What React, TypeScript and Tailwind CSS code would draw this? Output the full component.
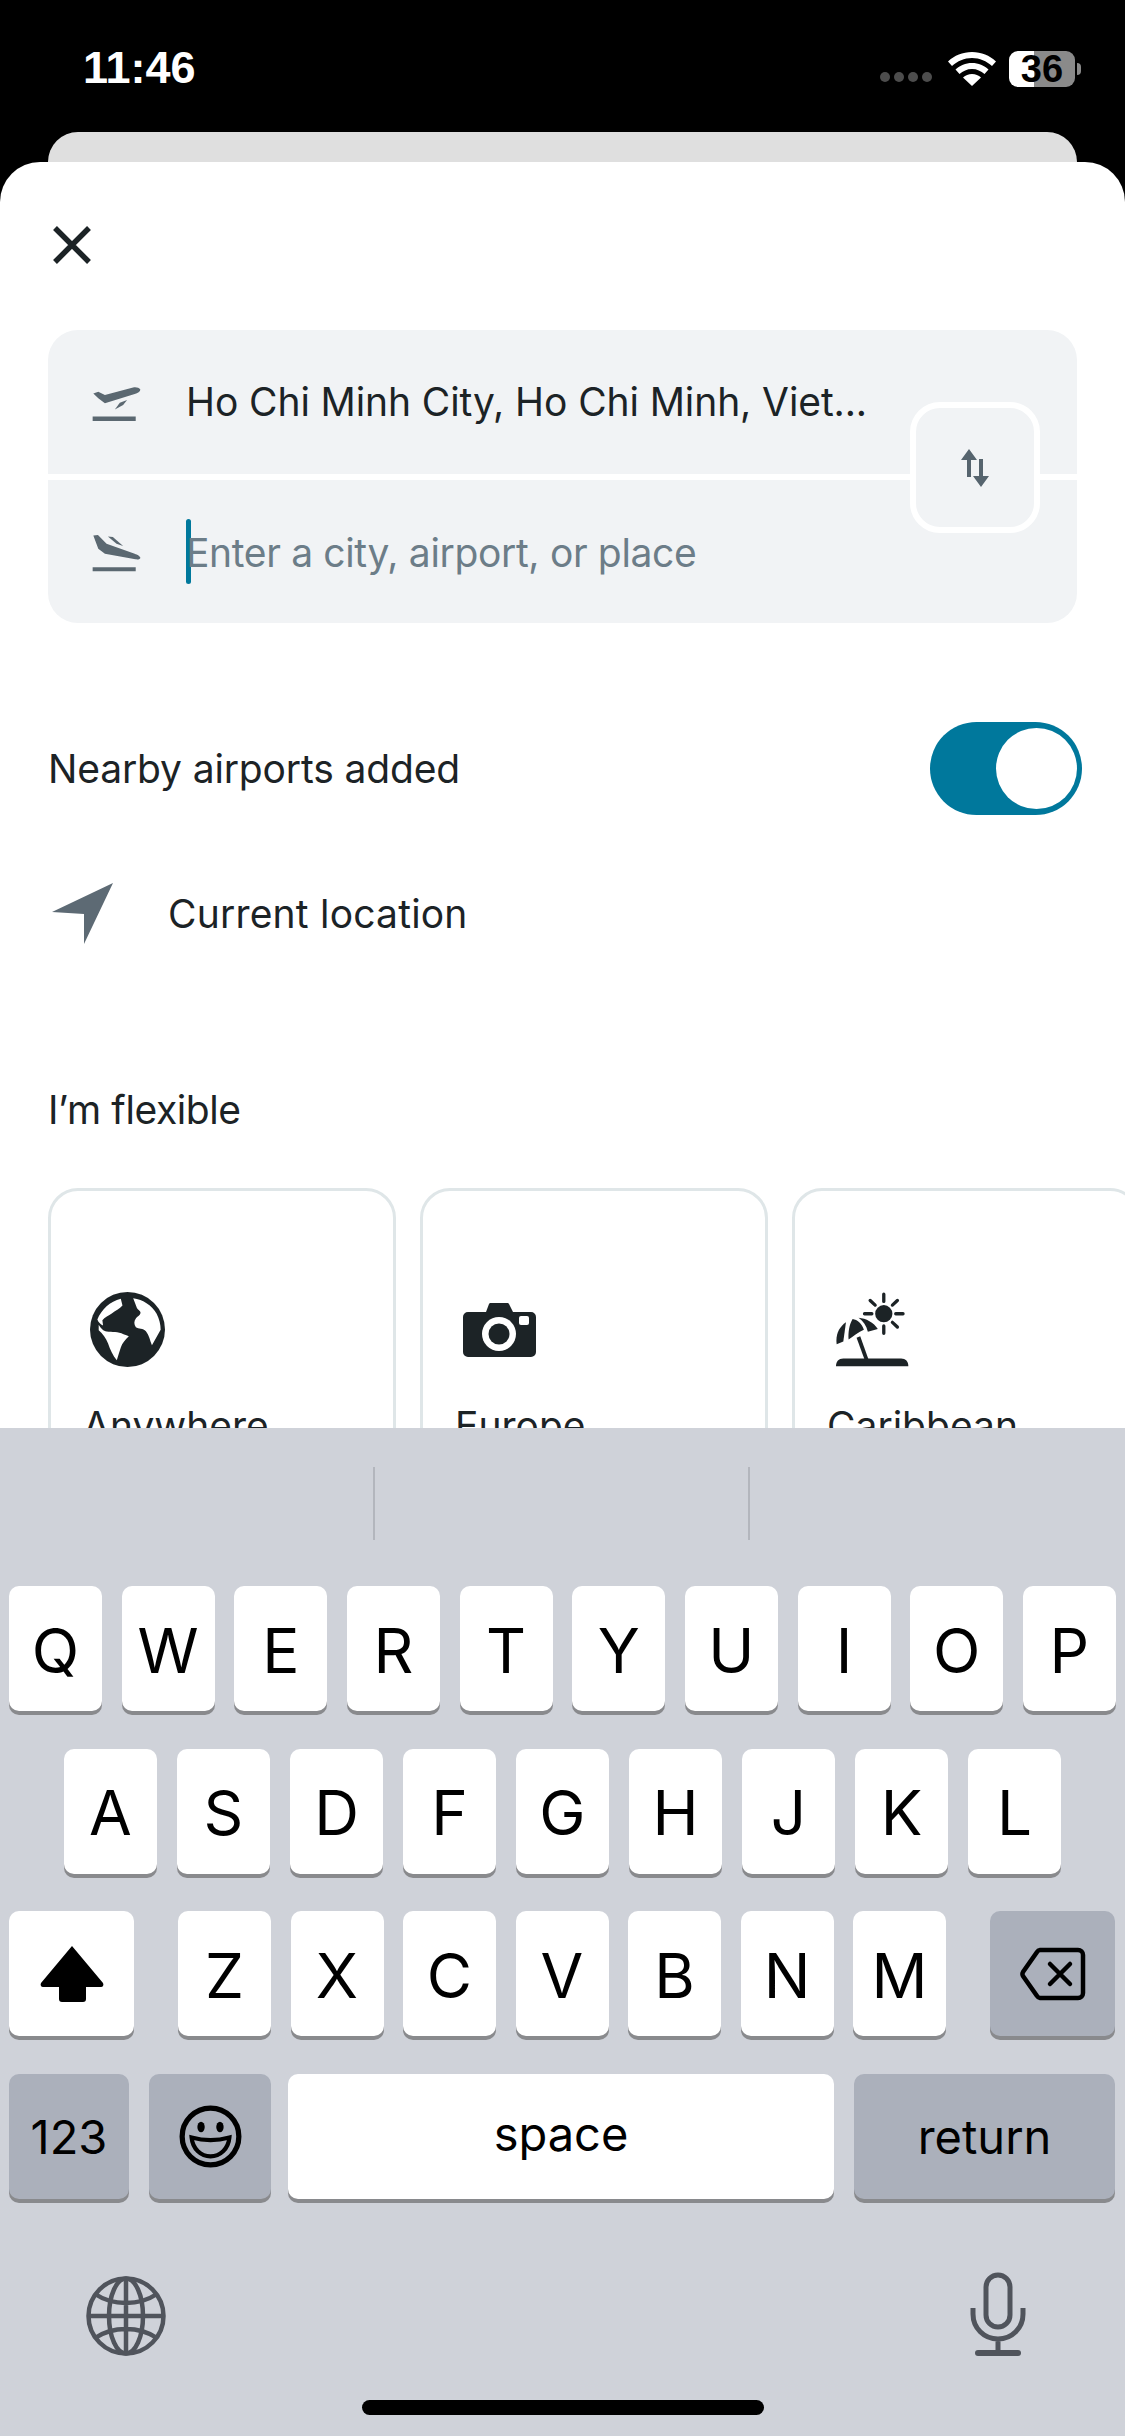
const rowOne = ["Q", "W", "E", "R", "T", "Y", "U", "I", "O", "P"];
const rowTwo = ["A", "S", "D", "F", "G", "H", "J", "K", "L"];
const rowThree = ["Z", "X", "C", "V", "B", "N", "M"];

const LetterKey = ({ label }: { label: string }) => (
  <div className="flex h-[125px] w-[93px] items-center justify-center rounded-[10px] bg-white pt-[4px] text-[62px] leading-none text-black shadow-[0_4px_0_#898a8d]">
    {label}
  </div>
);

const Takeoff = () => (
  <svg viewBox="60 36 160 120" className="h-[40px] w-[53px] shrink-0 fill-[#5b6871]">
    <path d="M68 140h130v13H68z" />
    <path d="M70 70l15-5 20 10 85-23c8-2 18 0 22 6 0 6-8 11-17 14l-90 28-20-15z" />
    <path d="M135 119l15-21 22-8-12 15z" />
  </svg>
);

const Landing = () => (
  <svg viewBox="60 20 160 120" className="h-[40px] w-[53px] shrink-0 fill-[#5b6871]">
    <path d="M68 126h130v12H68z" />
    <path d="M70 30l14-1 26 26 85 30c8 3 17 8 17 12 0 5-7 6-15 5l-92-17-20-15z" />
    <path d="M114 33l15 2 31 27-20-7z" />
  </svg>
);

const SwapArrows = () => (
  <svg viewBox="0 0 30 38" className="h-[38px] w-[30px] fill-[#56646e]">
    <path d="M9 0l8 11H11v17H7V11H1z" />
    <path d="M21 38l8-11h-6V10h-4v17h-6z" />
  </svg>
);

const NavArrow = () => (
  <svg viewBox="0 0 61 61" className="h-[61px] w-[61px]">
    <path d="M61 0L0 29l32 2v30z" className="fill-[#5d6a74]" />
  </svg>
);

const GlobeIcon = () => (
  <svg viewBox="276 126 224 224" className="ml-[7px] h-[75px] w-[75px]">
    <circle cx="388" cy="238" r="112" fill="#1c2326" />
    <path
      d="M298 208c12-30 38-54 70-62l5 20c-8 10-22 16-32 24-8 6-22 12-28 20l2 16c-8-4-14-10-17-18z"
      fill="#fff"
    />
    <path
      d="M405 145c30 4 56 22 70 46 8 16 12 32 12 48l-26 46c-6-14-8-30-18-42-8-10-22-6-30-12-6-8-6-18 0-26 4-6 12-8 14-16 0-8-10-10-12-18z"
      fill="#fff"
    />
    <path
      d="M302 224c6 10 14 20 24 20 16 2 34 0 50 8 6 2 12 4 16 6-10 10-20 20-24 34-4 12-8 26-12 38-12-14-20-32-26-50-6-16-16-30-28-40z"
      fill="#fff"
    />
  </svg>
);

const CameraIcon = () => (
  <svg viewBox="0 0 73 54" className="ml-[8px] h-[54px] w-[73px]">
    <path
      d="M27 0h17a2 2 0 0 1 2 1l4 8h18a5 5 0 0 1 5 5v35a5 5 0 0 1-5 5H5a5 5 0 0 1-5-5V14a5 5 0 0 1 5-5h18l3-8a2 2 0 0 1 1-1z"
      fill="#1c2326"
    />
    <circle cx="36" cy="31" r="17" fill="#fff" />
    <circle cx="36" cy="31" r="10.500" fill="#1c2326" />
    <rect x="56" y="13" width="10" height="9" rx="2" fill="#fff" />
  </svg>
);

const BeachIcon = () => (
  <svg viewBox="110 125 220 225" className="ml-[9px] h-[75px] w-[73px] fill-[#1c2326]">
    <circle cx="254" cy="190" r="26" />
    <g stroke="#1c2326" strokeWidth="10" strokeLinecap="round">
      <path d="M254 131v22M254 227v22M196 190h22M290 190h22M213 150l15 14M295 150l-15 14M280 216l15 14" />
    </g>
    <path d="M112 282c-4-30 8-52 28-66l-8 58z" />
    <path d="M148 268c-2-20 2-46 12-62 14 2 28 14 34 32-16 6-32 20-46 30z" />
    <path d="M178 202c22 2 46 14 58 34l-30 8c-4-18-14-32-28-42z" />
    <path d="M172 262l11-4 25 70h-12z" />
    <path d="M110 348c0-14 8-23 22-23h174c14 0 22 9 22 23z" />
  </svg>
);

const FlexCard = ({ label, icon }: { label: string; icon: React.ReactNode }) => (
  <div className="h-[300px] w-[348px] shrink-0 rounded-[30px] border-[3px] border-[#dfe6e8] bg-white pl-[32px] pt-[101px]">
    <div className="flex h-[75px] items-center">{icon}</div>
    <div className="mt-[36px] text-[39px] leading-[46px] text-[#1c2326]">{label}</div>
  </div>
);

const App = () => {
  return (
    <div className="flex h-[2436px] w-[1125px] flex-col overflow-hidden bg-black [font-family:Inter,'Liberation_Sans',sans-serif]">
      {/* status bar */}
      <div className="flex h-[132px] shrink-0 items-start justify-between pl-[83px] pr-[44px] pt-[44px]">
        <span className="text-[45px] font-semibold leading-[48px] text-white [font-family:'Liberation_Sans',sans-serif]">
          11:46
        </span>
        <div className="flex items-center pt-[7px]">
          <div className="mr-[16px] mt-[16px] flex gap-[4px]">
            <span className="h-[10px] w-[10px] rounded-full bg-[#4d4d4d]" />
            <span className="h-[10px] w-[10px] rounded-full bg-[#4d4d4d]" />
            <span className="h-[10px] w-[10px] rounded-full bg-[#4d4d4d]" />
            <span className="h-[10px] w-[10px] rounded-full bg-[#4d4d4d]" />
          </div>
          <svg viewBox="0 0 48 34" className="mr-[13px] h-[34px] w-[48px] fill-white">
            <path d="M24 0c9.500 0 17.500 3.500 24 9.500l-4 4.500C38.500 9 31.800 6 24 6S9.500 9 4 14L0 9.500C6.500 3.500 14.500 0 24 0z" />
            <path d="M24 11c6.500 0 12 2.500 16.500 6.500l-4 4.500c-3.500-3-7.500-5-12.500-5s-9 2-12.500 5l-4-4.500C12 13.500 17.500 11 24 11z" />
            <path d="M24 22c3.500 0 6.500 1.300 9 3.500L24 34l-9-8.500c2.500-2.200 5.500-3.500 9-3.500z" />
          </svg>
          <div className="flex h-[36px] w-[66px] items-center justify-center rounded-[9px] bg-[linear-gradient(90deg,#fff_38%,#8a8a8a_38%)] text-[38px] font-bold leading-none text-black [font-family:'Liberation_Sans',sans-serif]">
            36
          </div>
          <span className="ml-[2px] h-[12px] w-[4px] rounded-r-full bg-[#8a8a8a]" />
        </div>
      </div>

      {/* sheet peeking out behind */}
      <div className="mx-[48px] h-[30px] shrink-0 rounded-t-[30px] bg-[#dfdfdf]" />

      {/* sheet */}
      <div className="h-[1266px] shrink-0 overflow-hidden rounded-t-[40px] bg-white">
        <div className="pl-[53px] pt-[64px]">
          <svg viewBox="0 0 38 38" className="h-[38px] w-[38px] stroke-[#1c2326]" strokeWidth="5.500">
            <path d="M2 2l34 34M36 2L2 36" />
          </svg>
        </div>

        <div className="relative mx-[48px] mt-[66px] h-[293px] overflow-hidden rounded-[30px] bg-[#f1f3f5]">
          <div className="flex h-[150px] items-center border-b-[6px] border-white pl-[42px]">
            <Takeoff />
            <span className="ml-[43px] text-[39px] leading-[46px] tracking-[-0.1px] text-[#1c2326]">
              Ho Chi Minh City, Ho Chi Minh, Viet...
            </span>
          </div>
          <div className="flex h-[143px] items-center pl-[42px]">
            <Landing />
            <span className="ml-[43px] h-[65px] w-[5px] rounded-full bg-[#00789c]" />
            <span className="-ml-[5px] pt-[3px] text-[39px] leading-[46px] tracking-[-0.35px] text-[#6c7d88]">
              Enter a city, airport, or place
            </span>
          </div>
          <div className="absolute left-[862px] top-[72px] flex h-[131px] w-[130px] items-center justify-center rounded-[30px] border-[6px] border-white bg-[#f1f3f5]">
            <SwapArrows />
          </div>
        </div>

        <div className="mt-[99px] flex items-center justify-between pl-[48px] pr-[43px]">
          <span className="text-[39px] leading-[46px] tracking-[-0.15px] text-[#1c2326]">Nearby airports added</span>
          <div className="flex h-[93px] w-[152px] items-center justify-end rounded-full bg-[#00789c] pr-[5px]">
            <span className="h-[81px] w-[81px] rounded-full bg-white" />
          </div>
        </div>

        <div className="mt-[68px] flex items-center pl-[52px]">
          <NavArrow />
          <span className="ml-[55px] text-[39px] leading-[46px] tracking-[0.2px] text-[#1c2326]">Current location</span>
        </div>

        <div className="mt-[143px] pl-[48px] text-[39px] leading-[46px] tracking-[-0.4px] text-[#1c2326]">I’m flexible</div>

        <div className="mt-[55px] flex gap-[24px] pl-[48px]">
          <FlexCard label="Anywhere" icon={<GlobeIcon />} />
          <FlexCard label="Europe" icon={<CameraIcon />} />
          <FlexCard label="Caribbean" icon={<BeachIcon />} />
        </div>
      </div>

      {/* keyboard */}
      <div className="flex min-h-0 flex-1 flex-col bg-[#cfd2d9]">
        <div className="flex h-[158px] shrink-0 items-start pt-[39px]">
          <div className="h-[73px] w-[375px] border-r-[2px] border-[#b3b6bd]" />
          <div className="h-[73px] w-[375px] border-r-[2px] border-[#b3b6bd]" />
        </div>

        <div className="flex flex-col gap-[37.500px]">
          <div className="flex justify-between px-[9px]">
            {rowOne.map((k) => (
              <LetterKey key={k} label={k} />
            ))}
          </div>
          <div className="flex justify-between px-[64px]">
            {rowTwo.map((k) => (
              <LetterKey key={k} label={k} />
            ))}
          </div>
          <div className="flex items-start justify-between pl-[9px] pr-[10px]">
            <div className="flex h-[125px] w-[125px] items-center justify-center rounded-[10px] bg-white shadow-[0_4px_0_#898a8d]">
              <svg viewBox="0 0 64 56" className="h-[56px] w-[64px] fill-black">
                <path d="M32 0L63 37c1 2 0 4-2 4H46v12c0 2-1 3-3 3H22c-2 0-3-1-3-3V41H3c-2 0-3-2-2-4z" />
              </svg>
            </div>
            <div className="flex gap-[19.500px]">
              {rowThree.map((k) => (
                <LetterKey key={k} label={k} />
              ))}
            </div>
            <div className="flex h-[125px] w-[125px] items-center justify-center rounded-[10px] bg-[#abb0bb] shadow-[0_4px_0_#898a8d]">
              <svg viewBox="0 0 66 54" className="h-[54px] w-[66px] fill-none stroke-black" strokeWidth="4.500">
                <path d="M20 3h38a5 5 0 0 1 5 5v38a5 5 0 0 1-5 5H20a4 4 0 0 1-3-2L3 29a4 4 0 0 1 0-4L17 5a4 4 0 0 1 3-2z" />
                <path d="M30 17l20 20M50 17L30 37" strokeLinecap="round" />
              </svg>
            </div>
          </div>
          <div className="flex items-start px-[9px] text-black">
            <div className="flex h-[125px] w-[120px] items-center justify-center rounded-[10px] bg-[#abb0bb] text-[47px] leading-none shadow-[0_4px_0_#898a8d]">
              123
            </div>
            <div className="ml-[20px] flex h-[125px] w-[122px] items-center justify-center rounded-[10px] bg-[#abb0bb] shadow-[0_4px_0_#898a8d]">
              <svg viewBox="0 0 60 60" className="h-[63px] w-[63px]">
                <circle cx="30" cy="30" r="27" fill="none" stroke="#000" strokeWidth="5" />
                <ellipse cx="21" cy="21" rx="3.500" ry="5" fill="#000" />
                <ellipse cx="39" cy="21" rx="3.500" ry="5" fill="#000" />
                <path d="M12 31c11 3 25 3 36 0-1 11-9 18-18 18s-17-7-18-18z" fill="none" stroke="#000" strokeWidth="4" />
              </svg>
            </div>
            <div className="ml-[17px] flex h-[125px] w-[546px] items-center justify-center rounded-[10px] bg-white pb-[6px] text-[47px] leading-none shadow-[0_4px_0_#898a8d]">
              space
            </div>
            <div className="ml-[20px] flex h-[125px] w-[261px] items-center justify-center rounded-[10px] bg-[#abb0bb] text-[47px] leading-none shadow-[0_4px_0_#898a8d]">
              return
            </div>
          </div>
        </div>

        <div className="mt-[73px] flex items-end justify-between pl-[86px] pr-[99px]">
          <svg viewBox="0 0 80 80" className="h-[80px] w-[80px] fill-none stroke-[#50545c]" strokeWidth="4.500">
            <circle cx="40" cy="40" r="37.500" />
            <ellipse cx="40" cy="40" rx="17" ry="37.500" />
            <path d="M40 2v76M2 40h76M9 18c18 12 44 12 62 0M9 62c18-12 44-12 62 0" />
          </svg>
          <svg viewBox="0 0 56 84" className="h-[84px] w-[56px] fill-none stroke-[#50545c]" strokeWidth="5">
            <rect x="16" y="3" width="24" height="52" rx="12" />
            <path d="M3 36v6c0 14 11 25 25 25s25-11 25-25v-6M28 67v14" />
            <path d="M8 81h40" strokeWidth="6" strokeLinecap="round" />
          </svg>
        </div>

        <div className="mt-[44px] flex justify-center">
          <div className="h-[15px] w-[402px] rounded-full bg-black" />
        </div>
      </div>
    </div>
  );
};

export default App;
